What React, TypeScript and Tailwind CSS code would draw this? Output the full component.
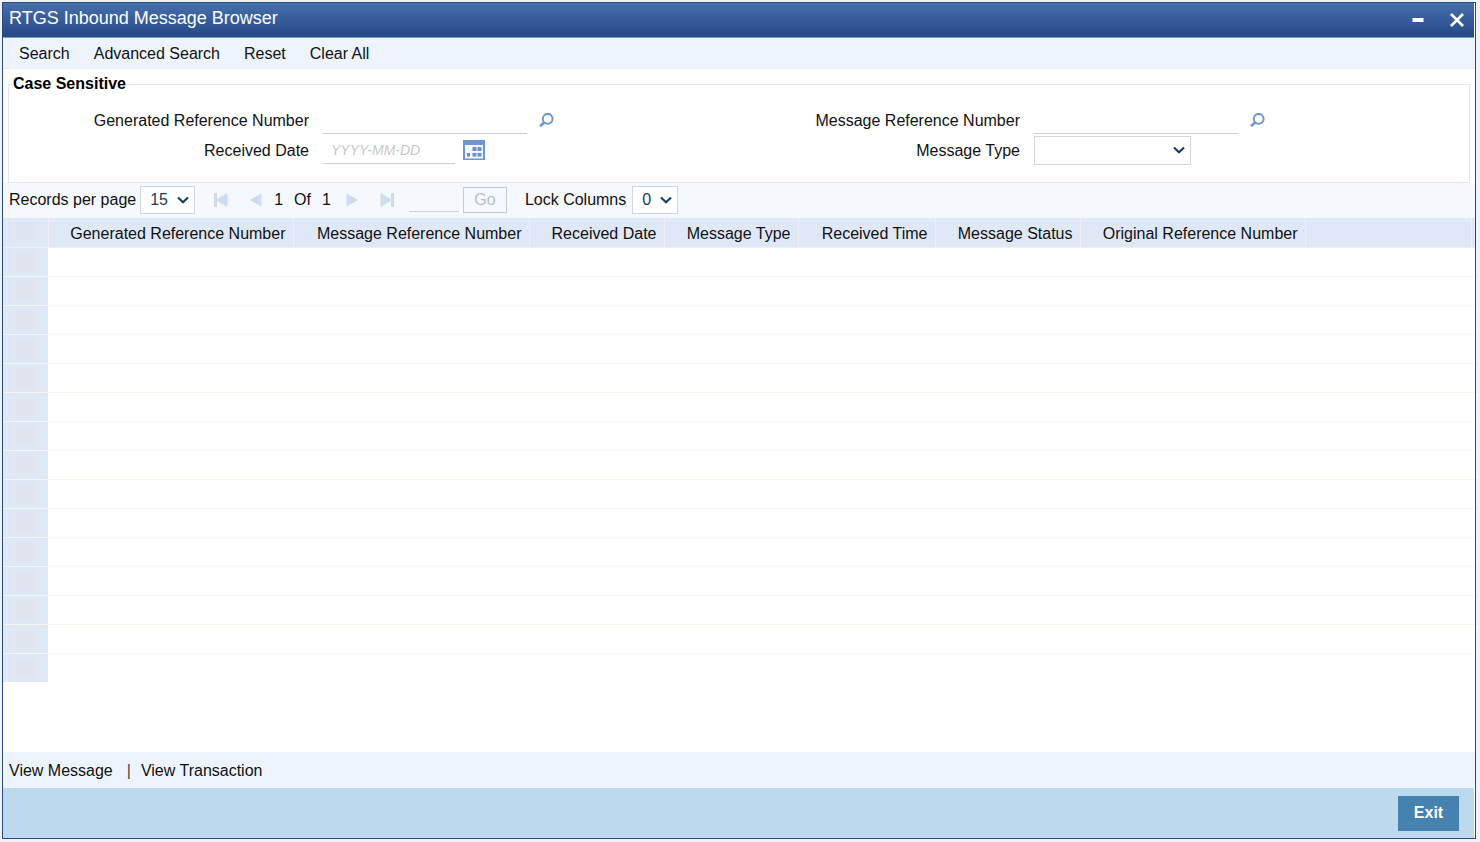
import {useState} from "react";
import type {ReactNode} from "react";

const actions = ["Search", "Advanced Search", "Reset", "Clear All"];

const columns = [
    {name: "Generated Reference Number", width: "w-[245px]"},
    {name: "Message Reference Number", width: "w-[236px]"},
    {name: "Received Date", width: "w-[135px]"},
    {name: "Message Type", width: "w-[134px]"},
    {name: "Received Time", width: "w-[137px]"},
    {name: "Message Status", width: "w-[145px]"},
    {name: "Original Reference Number", width: "w-[225px]"},
];

const rows = Array.from({length: 15}, (_, i) => i + 1);

function SearchIcon() {
    return (
        <svg width="15" height="14" viewBox="0 0 15 14" fill="none" stroke="#7096cf">
            <circle cx="8.7" cy="5.8" r="4.9" strokeWidth="2"/>
            <path d="M5.4 9.2L1 13.2" strokeWidth="2.6"/>
        </svg>
    )
}

function CalendarIcon() {
    return (
        <svg width="22" height="20" viewBox="0 0 22 20">
            <rect x="0.5" y="0.5" width="21" height="19" fill="#f3f7fd" stroke="#7096cf"/>
            <rect x="1" y="1" width="20" height="4" fill="#7096cf"/>
            <path d="M1 19h20M1.5 5v14M20.5 5v14" stroke="#7096cf" fill="none"/>
            <path d="M9.5 7h4v4h-4zM14.5 7h4v4h-4zM4 13h3v3.5H4zM9.5 13h4v3.5h-4zM14.5 13h4v3.5h-4z" fill="#6a90cc"/>
        </svg>
    )
}

function Select({id, className, children}: { id: string, className: string, children?: ReactNode }) {
    return (
        <div className={"relative"}>
            <select id={id}
                    className={`block appearance-none rounded-none border border-[#d3d6dc] bg-white text-[#1c3a5e] outline-none ${className}`}>
                {children}
            </select>
            <svg className="pointer-events-none absolute right-[6px] top-1/2 -translate-y-1/2" width="12" height="8"
                 viewBox="0 0 12 8" fill="none" stroke="#173f66" strokeWidth="2.2">
                <path d="M1 1.5l5 4.7 5-4.7"/>
            </svg>
        </div>
    )
}

function Label({id, children}: { id: string, children: ReactNode }) {
    return <label htmlFor={id} className={"mr-[14px] w-[300px] pt-0.5 text-right"}>{children}</label>
}

function App() {
    const [open, setOpen] = useState(true);

    return (
        <div
            className={"flex min-h-screen bg-[#eef2fb] pt-[2px] pr-1 pb-[3px] pl-[2px] font-['Liberation_Sans',Arial,sans-serif] text-base leading-5 text-[#111]"}>
            <div className="flex flex-1 flex-col border border-[#2b4a80] bg-white">
                <header
                    className="mr-px flex h-[35px] items-center border-b border-[#7f9cc8] bg-linear-to-b from-[#4770ac] to-[#244886] pr-[10px] pl-[6px] text-white">
                    <h1 className={"flex-1 pb-1 text-lg leading-5"}>RTGS Inbound Message Browser</h1>
                    <button aria-label="Minimize" onClick={() => setOpen(prev => !prev)} className={"mr-[26px]"}>
                        <svg width="12" height="14" viewBox="0 0 12 14">
                            <rect x="0.5" y="5" width="11" height="4" fill="#fff"/>
                        </svg>
                    </button>
                    <button aria-label="Close">
                        <svg width="14" height="14" viewBox="0 0 14 14" stroke="#fff" strokeWidth="2.6">
                            <path d="M1 1l12 12M13 1L1 13"/>
                        </svg>
                    </button>
                </header>
                {open && (
                    <>
                        <nav className="flex h-[31px] items-center gap-6 border-b border-[#e6ebf3] bg-[#eef4fe] pt-0.5 pl-4">
                            {actions.map(action => <button key={action}>{action}</button>)}
                        </nav>

                        <fieldset className="mx-[5px] mt-[5px] border border-[#e2e6ee]">
                            <legend className="ml-[3px] pl-px font-bold text-black">Case Sensitive</legend>
                            <div className="grid grid-cols-2 pt-[11px] pr-[38px] pb-[17px]">
                                <div className="flex h-[30px] items-center">
                                    <Label id="genRef">Generated Reference Number</Label>
                                    <input id="genRef"
                                           className="h-[27px] w-[204px] border-b border-[#cfcfcf] px-2 outline-none"/>
                                    <button aria-label="Find generated reference" className="ml-3"><SearchIcon/></button>
                                </div>
                                <div className="flex h-[30px] items-center">
                                    <Label id="msgRef">Message Reference Number</Label>
                                    <input id="msgRef"
                                           className="h-[27px] w-[204px] border-b border-[#cfcfcf] px-2 outline-none"/>
                                    <button aria-label="Find message reference" className="ml-3"><SearchIcon/></button>
                                </div>
                                <div className="flex h-[30px] items-center">
                                    <Label id="recDate">Received Date</Label>
                                    <input id="recDate" placeholder="YYYY-MM-DD"
                                           className="h-[27px] w-[132px] border-b border-[#cfcfcf] px-2 text-sm outline-none placeholder:text-[#c8c8c8] placeholder:italic"/>
                                    <button aria-label="Pick a date" className="ml-2"><CalendarIcon/></button>
                                </div>
                                <div className="flex h-[30px] items-center">
                                    <Label id="msgType">Message Type</Label>
                                    <Select id="msgType" className="h-[29px] w-[157px] px-2"/>
                                </div>
                            </div>
                        </fieldset>

                        <div className="flex h-[35px] items-center bg-[#f5f9fe] pb-px pl-[6px]">
                            <label htmlFor="perPage" className="mr-1">Records per page</label>
                            <Select id="perPage" className="h-7 w-[55px] pl-[9px]">
                                <option>15</option>
                            </Select>
                            <button aria-label="First page" disabled className="ml-[18px]">
                                <svg width="15" height="14" viewBox="0 0 15 14" fill="#ccdcf3">
                                    <path d="M1 0h3v14H1zM14.5 0v14L3 7z"/>
                                </svg>
                            </button>
                            <button aria-label="Previous page" disabled className="ml-[22px]">
                                <svg width="12" height="14" viewBox="0 0 12 14" fill="#ccdcf3">
                                    <path d="M11.5 0.5v13L0 7z"/>
                                </svg>
                            </button>
                            <span className="ml-3">1</span>
                            <span className="ml-[11px]">Of</span>
                            <span className="ml-[11px]">1</span>
                            <button aria-label="Next page" disabled className="ml-[15px]">
                                <svg width="12" height="14" viewBox="0 0 12 14" fill="#ccdcf3">
                                    <path d="M0.5 0.5v13L12 7z"/>
                                </svg>
                            </button>
                            <button aria-label="Last page" disabled className="ml-[22px]">
                                <svg width="15" height="14" viewBox="0 0 15 14" fill="#ccdcf3">
                                    <path d="M11 0h3v14h-3zM0.5 0v14L12 7z"/>
                                </svg>
                            </button>
                            <input aria-label="Page number" disabled
                                   className="mr-1 ml-[14px] h-6 w-[50px] border-b border-[#cdd0d6]"/>
                            <button disabled
                                    className="h-[26px] w-11 border border-[#c3cad5] text-[#b9bec6]">Go
                            </button>
                            <label htmlFor="lock" className="mr-[6px] ml-[18px]">Lock Columns</label>
                            <Select id="lock" className="h-7 w-[46px] pl-[9px]">
                                <option>0</option>
                            </Select>
                        </div>

                        <div className="flex-1 pb-[70px]">
                            <table className="w-full table-fixed border-collapse">
                                <thead>
                                <tr className="h-[29px] bg-[#dfe8f6]">
                                    <th className="w-[45px] border-r border-b border-[#f3efec] p-0">
                                        <input type="checkbox" disabled aria-label="Select all"
                                               className="mx-auto block size-5 appearance-none bg-[#dfe6f3]"/>
                                    </th>
                                    {columns.map(col => (
                                        <th key={col.name}
                                            className={`${col.width} border-r border-b border-[#f3efec] p-0 pt-[3px] pr-[7px] text-right font-normal whitespace-nowrap`}>{col.name}</th>
                                    ))}
                                    <th className="border-b border-[#f3efec] p-0"></th>
                                    <th className="w-1 border-b border-l border-[#f3efec] p-0"></th>
                                </tr>
                                </thead>
                                <tbody>
                                {rows.map(row => (
                                    <tr key={row} className="h-[29px] border-b border-[#f8f4ec] last:border-b-0">
                                        <td className="bg-[#dfe8f6] p-0">
                                            <input type="checkbox" disabled aria-label={`Select row ${row}`}
                                                   className="mx-auto block size-5 appearance-none bg-[#e1e5ef]"/>
                                        </td>
                                        <td colSpan={9}></td>
                                    </tr>
                                ))}
                                </tbody>
                            </table>
                        </div>

                        <div className="flex h-9 items-center bg-[#eef4fe] pt-0.5 pl-[6px]">
                            <a href="#message">View Message</a>
                            <span className="mr-[10px] ml-[14px] text-[#444]">|</span>
                            <a href="#transaction">View Transaction</a>
                        </div>
                        <footer className="mr-px flex h-[50px] items-center justify-end bg-[#bdd9ed] pr-[15px]">
                            <button className="h-[35px] w-[61px] bg-[#4682af] font-bold text-white">Exit</button>
                        </footer>
                    </>
                )}
            </div>
        </div>
    )
}

export default App;
